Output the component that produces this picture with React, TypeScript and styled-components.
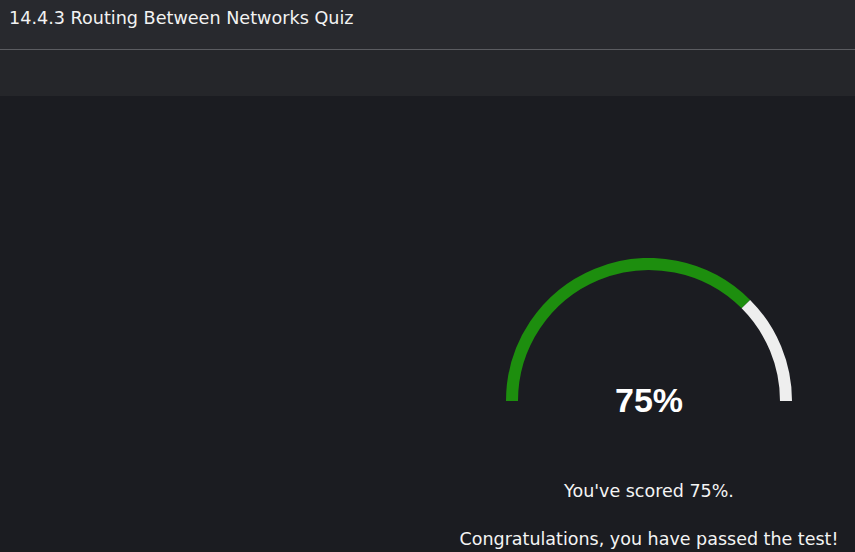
import styled, { createGlobalStyle } from 'styled-components'

const GlobalStyle = createGlobalStyle`
    html, body {
        margin: 0;
        padding: 0;
        background-color: #1b1c21;
        height: 100%;
    }
    #root {
        min-height: 100%;
    }
`

const Page = styled.div`
    display: flex;
    flex-direction: column;
    min-height: 552px;
    font-family: 'DejaVu Sans', 'Liberation Sans', sans-serif;
    color: #ffffff;
`

const TopBar = styled.header`
    height: 50px;
    box-sizing: border-box;
    padding: 8px 0 0 9px;
    background-color: #28292e;
    border-bottom: 1px solid #5b5c61;
    h1 {
        margin: 0;
        font-size: 17.6px;
        line-height: 20px;
        font-weight: normal;
        color: #f2f2f2;
    }
`

const SubBar = styled.div`
    height: 46px;
    background-color: #25262a;
`

const Main = styled.main`
    flex: 1;
    display: grid;
    grid-template-columns: 443px 1fr;
    background-color: #1b1c21;
`

const ResultPanel = styled.section`
    grid-column: 2;
    display: flex;
    flex-direction: column;
    align-items: center;
    padding-top: 162px;
`

const Gauge = styled.div`
    position: relative;
    width: 300px;
    height: 143px;
    svg {
        display: block;
    }
`

const Percent = styled.div`
    position: absolute;
    left: 0;
    right: 0;
    top: 125px;
    text-align: center;
    font-family: 'Liberation Sans', Arial, sans-serif;
    font-weight: bold;
    font-size: 34px;
    line-height: 34px;
    color: #ffffff;
`

const Message = styled.p<{ $gap: number }>`
    margin: ${p => p.$gap}px 0 0 0;
    font-size: 17.5px;
    line-height: 24px;
    color: #f4f4f4;
    white-space: nowrap;
`

const score = 75

function arcPoint(cx: number, cy: number, r: number, deg: number) {
    const rad = (deg * Math.PI) / 180
    return [cx + r * Math.cos(rad), cy - r * Math.sin(rad)]
}

const ScoreGauge = ({ value }: { value: number }) => {
    const cx = 150
    const cy = 143
    const r = 137
    const [sx, sy] = arcPoint(cx, cy, r, 180)
    const [mx, my] = arcPoint(cx, cy, r, 180 - (value / 100) * 180)
    const [ex, ey] = arcPoint(cx, cy, r, 0)
    return (
        <Gauge>
            <svg width="300" height="143" viewBox="0 0 300 143">
                <path d={`M ${sx} ${sy} A ${r} ${r} 0 0 1 ${mx} ${my}`} fill="none" stroke="#1d8e0e" strokeWidth="12" />
                <path d={`M ${mx} ${my} A ${r} ${r} 0 0 1 ${ex} ${ey}`} fill="none" stroke="#eeeeee" strokeWidth="12" />
            </svg>
            <Percent>{value}%</Percent>
        </Gauge>
    )
}

export default function App() {
    return (
        <Page>
            <GlobalStyle />
            <TopBar>
                <h1>14.4.3 Routing Between Networks Quiz</h1>
            </TopBar>
            <SubBar />
            <Main>
                <ResultPanel>
                    <ScoreGauge value={score} />
                    <Message $gap={78}>You've scored {score}%.</Message>
                    <Message $gap={24}>Congratulations, you have passed the test!</Message>
                </ResultPanel>
            </Main>
        </Page>
    )
}
